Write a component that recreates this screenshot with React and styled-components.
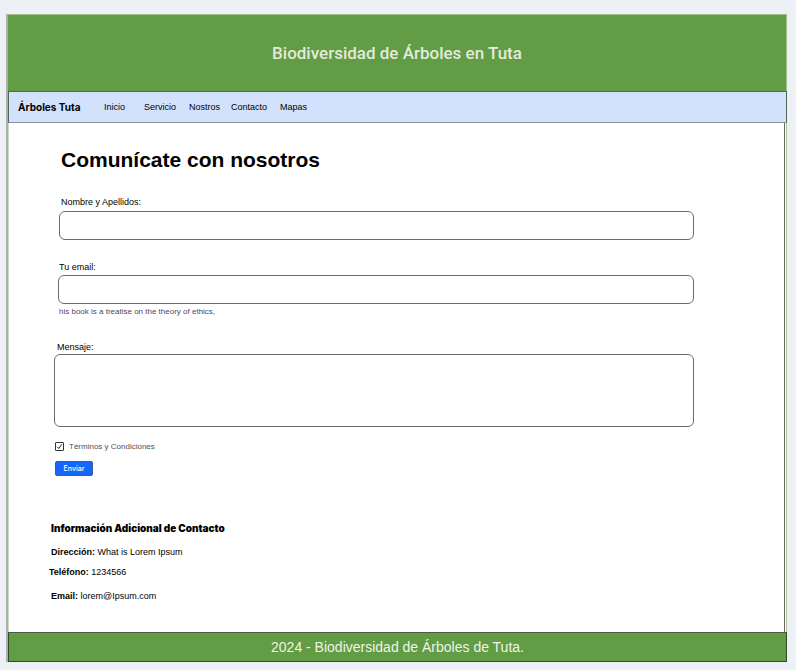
import React from "react";
import styled, { createGlobalStyle } from "styled-components";

const GlobalStyle = createGlobalStyle`
  * { box-sizing: border-box; }
  body {
    margin: 0;
    background: #edf1f6;
    color: #000;
    font: 9px/12px "Liberation Sans", Arial, sans-serif;
  }
`;

const Page = styled.div`
  margin: 14px 9px 8px 6px;
  border-left: 2px solid #abb1b2;
`;

const Header = styled.header`
  display: flex;
  align-items: center;
  justify-content: center;
  height: 77px;
  border: 1px solid #a3c08f;
  border-width: 1px 1px 0 0;
  background: #629c44;
`;

const SiteTitle = styled.h1`
  margin: 0;
  color: #e2ebdc;
  font: 500 17px/20px Roboto, sans-serif;
`;

const Nav = styled.nav`
  display: flex;
  align-items: center;
  height: 32px;
  padding: 0 9px;
  border: 1px solid #4f6650;
  border-bottom-color: #8790a0;
  background: #d3e2fc;
`;

const Brand = styled.a`
  width: 86px;
  color: #000;
  font: 700 10px/14px Inter, sans-serif;
  text-decoration: none;
`;

const NavLink = styled.a`
  width: ${(p) => p.$width}px;
  color: #000;
  text-decoration: none;
`;

const Main = styled.main`
  padding: 24px 90px 30px 42px;
  border-left: 1px solid #c9dfba;
  border-right: 1px solid #6b6462;
  margin-right: 2px;
  background: #fff;
  box-shadow: 1px 0 0 #fff, 2px 0 0 #a5c491;
`;

const Heading = styled.h2`
  margin: 0 0 23px 10px;
  font-size: 21px;
  line-height: 26px;
`;

const Field = styled.div`
  display: flex;
  flex-direction: column;
  gap: ${(p) => p.$gap || 2}px;
  margin: 0 0 ${(p) => p.$after}px ${(p) => p.$inset}px;
`;

const Label = styled.label`
  padding-left: ${(p) => p.$inset}px;
`;

const TextBox = styled.input`
  width: 100%;
  height: 29px;
  padding: 0 8px;
  border: 1px solid #6b6b6b;
  border-radius: 6px;
  background: #fff;
  font: inherit;
`;

const TextArea = styled.textarea`
  display: block;
  width: 100%;
  height: 73px;
  padding: 8px;
  border: 1px solid #6b6b6b;
  border-radius: 6px;
  background: #fff;
  font: inherit;
  resize: none;
`;

const Hint = styled.small`
  padding-left: 1px;
  color: #4c4a5c;
  font-size: 8px;
  line-height: 12px;
`;

const CheckRow = styled.label`
  display: flex;
  align-items: center;
  gap: 5px;
  margin: 0 0 8px 4px;
  color: #4a5260;
  font-size: 8px;
  line-height: 13px;
`;

const CheckHolder = styled.span`
  display: grid;
  width: 9px;
  height: 9px;
  > * { grid-area: 1 / 1; }
`;

const CheckBox = styled.input`
  appearance: none;
  width: 9px;
  height: 9px;
  margin: 0;
  border: 1px solid #333;
  border-radius: 1px;
  background: #fff;
`;

const CheckMark = styled.svg`
  width: 9px;
  height: 9px;
  pointer-events: none;
  visibility: hidden;
  input:checked + & { visibility: visible; }
`;

const Submit = styled.button`
  display: block;
  width: 38px;
  height: 15px;
  margin: 0 0 45px 4px;
  padding: 0;
  border: 1px solid #3c5a96;
  border-radius: 2px;
  background: #1766fa;
  color: #fff;
  font: 500 7px/13px Inter, sans-serif;
`;

const InfoTitle = styled.h3`
  margin: 0 0 11px;
  font: 900 10px/14px Inter, sans-serif;
`;

const InfoLine = styled.p`
  margin: 0 0 ${(p) => p.$after}px ${(p) => p.$outdent ? -2 : 0}px;
  b { font-weight: 700; }
`;

const Footer = styled.footer`
  display: flex;
  align-items: center;
  justify-content: center;
  height: 30px;
  border: 1px solid #2f4a26;
  border-top-color: #4a5b42;
  background: #629c44;
  color: #edf5e8;
  font-size: 14px;
  line-height: 18px;
`;

const links = [
  ["Inicio", 40],
  ["Servicio", 45],
  ["Nostros", 42],
  ["Contacto", 49],
  ["Mapas", 40],
];

export default function App() {
  return (
    <>
      <GlobalStyle />
      <Page>
        <Header>
          <SiteTitle>Biodiversidad de Árboles en Tuta</SiteTitle>
        </Header>
        <Nav>
          <Brand href="#">Árboles Tuta</Brand>
          {links.map(([name, width]) => (
            <NavLink key={name} href="#" $width={width}>{name}</NavLink>
          ))}
        </Nav>
        <Main>
          <Heading>Comunícate con nosotros</Heading>
          <form onSubmit={(e) => e.preventDefault()}>
            <Field $inset={8} $gap={3} $after={21}>
              <Label htmlFor="name" $inset={2}>Nombre y Apellidos:</Label>
              <TextBox id="name" />
            </Field>
            <Field $inset={7} $after={23}>
              <Label htmlFor="email" $inset={1}>Tu email:</Label>
              <TextBox id="email" type="email" aria-describedby="hint" />
              <Hint id="hint">his book is a treatise on the theory of ethics,</Hint>
            </Field>
            <Field $inset={3} $gap={1} $after={13}>
              <Label htmlFor="message" $inset={3}>Mensaje:</Label>
              <TextArea id="message" />
            </Field>
            <CheckRow>
              <CheckHolder>
                <CheckBox type="checkbox" defaultChecked />
                <CheckMark viewBox="0 0 9 9" fill="none" stroke="#222">
                  <path d="M2.2 4.8 3.8 6.5 6.8 2.3" />
                </CheckMark>
              </CheckHolder>
              Términos y Condiciones
            </CheckRow>
            <Submit type="submit">Enviar</Submit>
          </form>
          <section>
            <InfoTitle>Información Adicional de Contacto</InfoTitle>
            <InfoLine $after={8}><b>Dirección:</b> What is Lorem Ipsum</InfoLine>
            <InfoLine $after={12} $outdent><b>Teléfono:</b> 1234566</InfoLine>
            <InfoLine $after={0}><b>Email:</b> lorem@Ipsum.com</InfoLine>
          </section>
        </Main>
        <Footer>2024 - Biodiversidad de Árboles de Tuta.</Footer>
      </Page>
    </>
  );
}
